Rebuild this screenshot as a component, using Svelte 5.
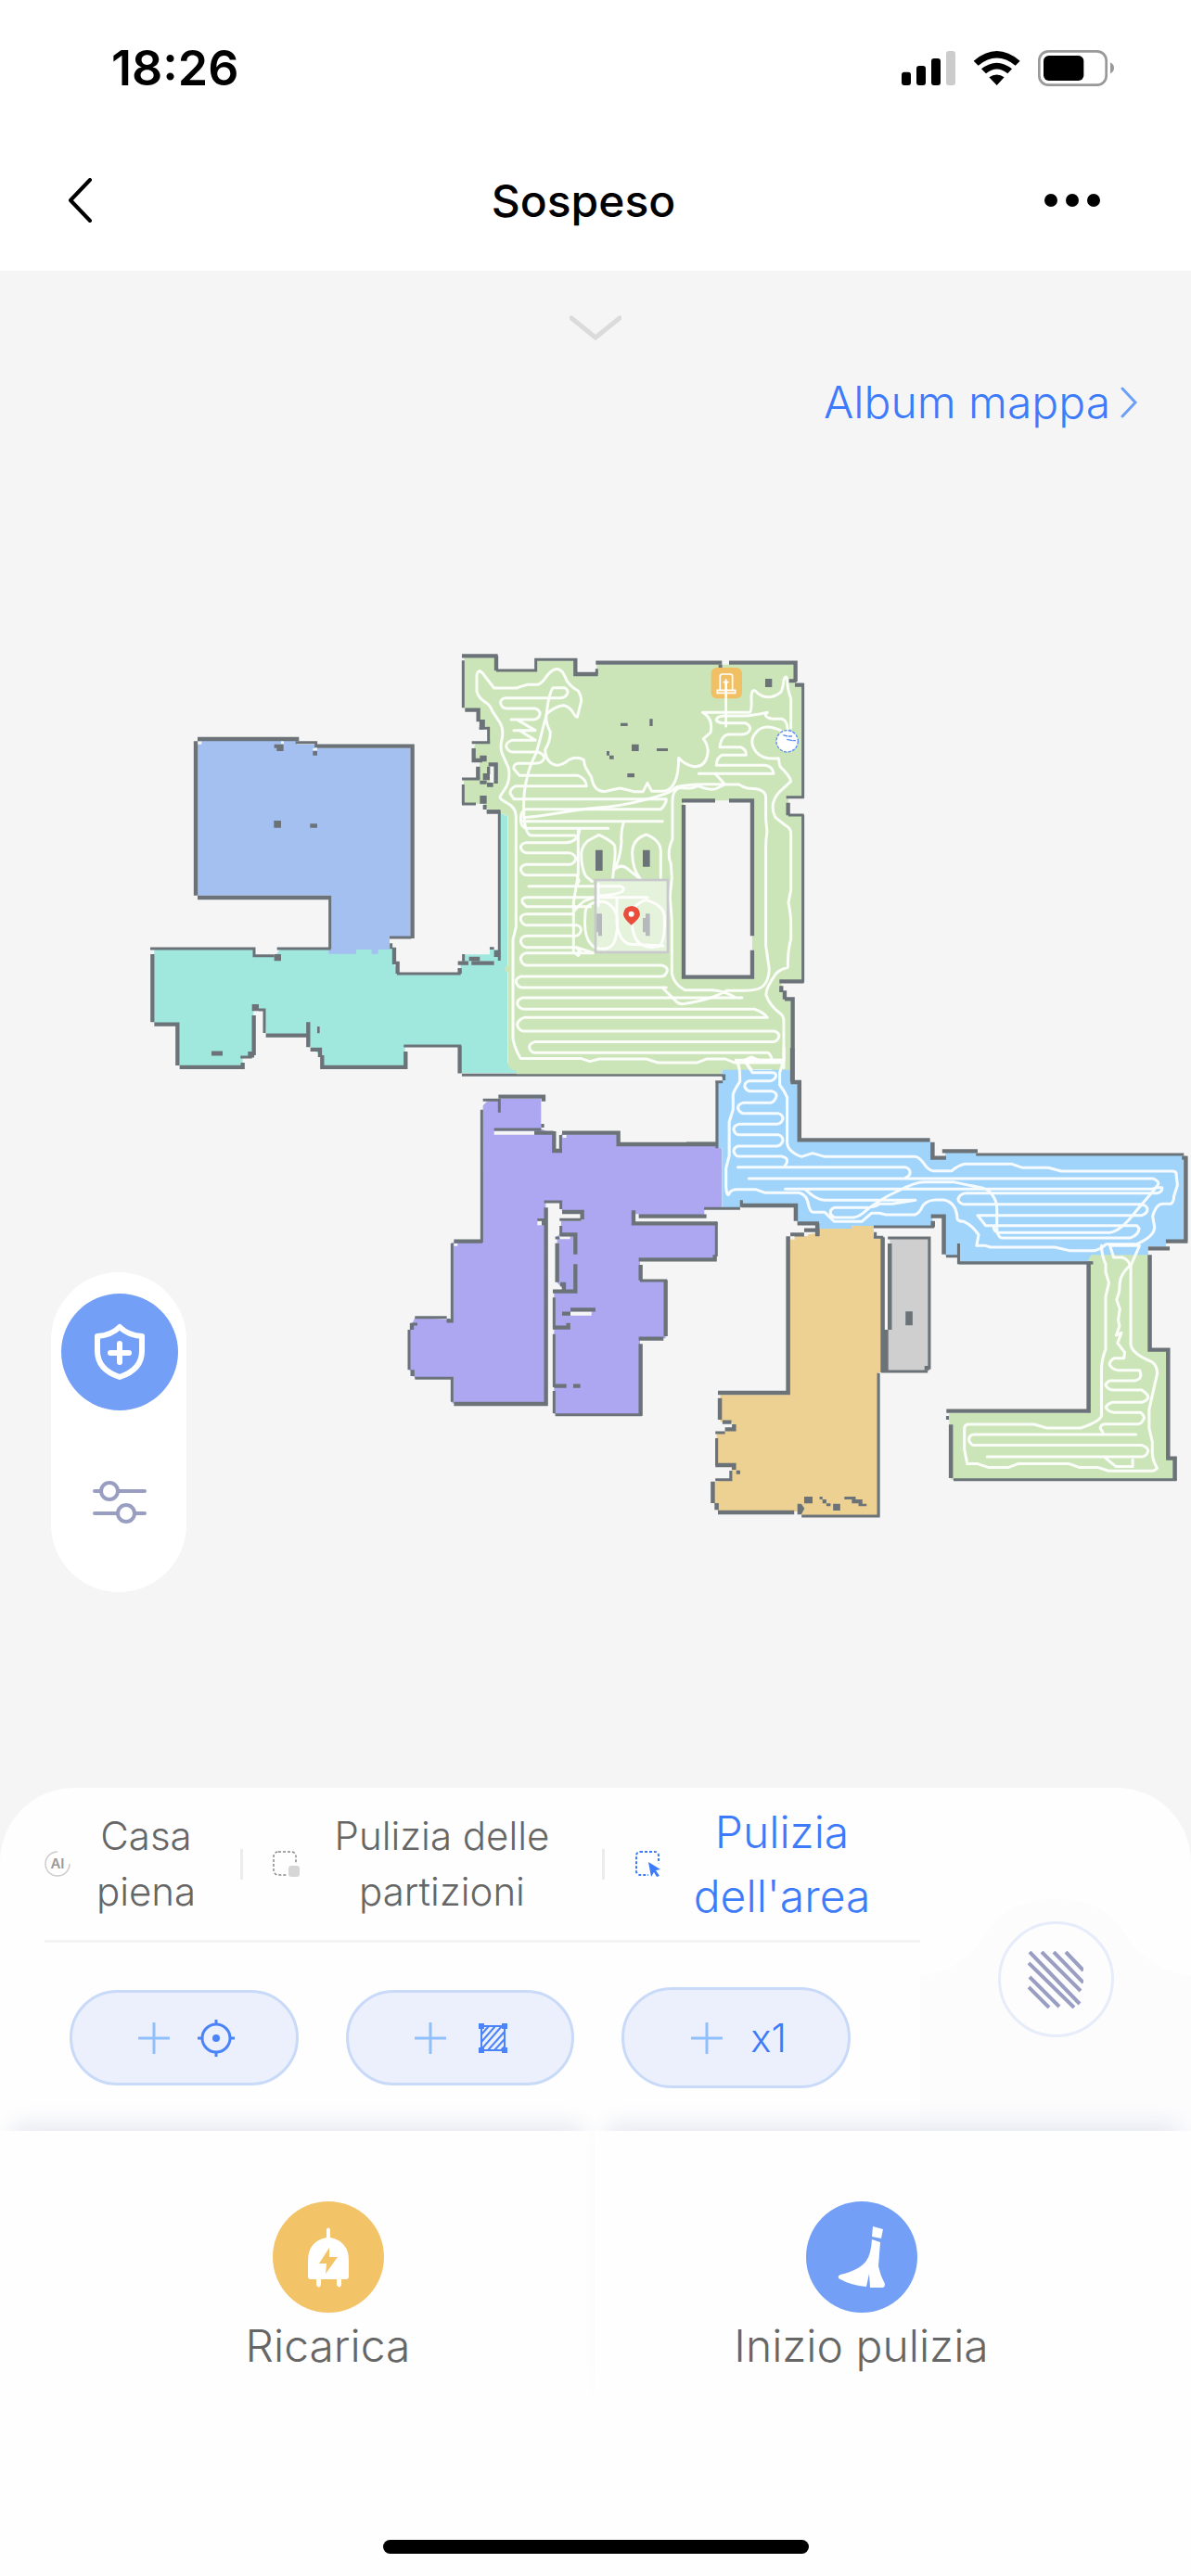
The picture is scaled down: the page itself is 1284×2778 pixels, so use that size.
<script lang="ts">
  type Mode = { id: string; label: string };

  const modes: Mode[] = [
    { id: 'all', label: 'Casa piena' },
    { id: 'rooms', label: 'Pulizia delle partizioni' },
    { id: 'area', label: "Pulizia dell'area" }
  ];

  let active = $state('area');
</script>

<div class="screen">
  <header>
    <div class="status">
      <span class="time">18:26</span>
      <svg class="status-icons" viewBox="39 39 690 117" aria-hidden="true">
        <rect x="39" y="110" width="30" height="43" rx="9" />
        <rect x="87" y="90" width="30" height="63" rx="9" />
        <rect x="135" y="66" width="30" height="87" rx="9" />
        <rect x="183" y="42" width="30" height="111" rx="9" fill="#ccc" />
        <path d="M272 74Q347 10 422 74L407 89Q347 40 287 89ZM297 100Q347 60 396 100L382 115Q347 86 312 115ZM322 127Q347 110 371 127L347 153Z" />
        <rect x="484" y="43" width="217" height="109" rx="30" fill="none" stroke="#999" stroke-width="8" />
        <rect x="498" y="57" width="130" height="81" rx="17" />
        <path d="M714 79q12 6 12 18t-12 18Z" fill="#999" />
      </svg>
    </div>
    <nav>
      <button class="icon-btn" aria-label="Indietro">
        <svg width="28" height="48" viewBox="0 0 28 48"><path d="M25 2 4 24l21 22" fill="none" stroke="#000" stroke-width="4" stroke-linecap="round" stroke-linejoin="round" /></svg>
      </button>
      <h1>Sospeso</h1>
      <button class="icon-btn end" aria-label="Altro">
        <svg width="60" height="16" viewBox="0 0 60 16"><circle cx="7" cy="8" r="7" /><circle cx="30" cy="8" r="7" /><circle cx="53" cy="8" r="7" /></svg>
      </button>
    </nav>
  </header>

  <main>
    <div class="map-head">
      <button class="icon-btn" aria-label="Espandi">
        <svg width="56" height="28" viewBox="0 0 56 28"><path d="M2 3 28 24 54 3" fill="none" stroke="#dbdbdb" stroke-width="5" stroke-linecap="round" /></svg>
      </button>
      <a href="#album">
        Album mappa
        <svg width="20" height="34" viewBox="0 0 20 34"><path d="M3 2l14 15L3 32" fill="none" stroke="#6c9ffa" stroke-width="3" stroke-linecap="round" /></svg>
      </a>
    </div>

    <svg class="map" viewBox="0 480 1284 1446" role="img" aria-label="Mappa">
      <!-- blue bedroom and teal hall -->
      <g transform="translate(140 680) scale(.3333)">
        <path fill="#a0e7de" d="M79 1032H400V1050H470L486 1032H650V1025H850L855 1080 868 1108H1070V1080H1083V1048H1164V1032H1198V590L1222 600V1400L1240 1408 1260 1432H1074V1345H890V1410H625V1380L585 1350 577 1305H440L435 1225H400V1372L365 1385V1408H160L155 1270H79Z" />
        <path fill="#a3c0f0" d="M219 357H540V368H600V380H908V990H840V1032H803V1046H782V1032H732V1046H643V1032H650V857H219Z" />
        <path class="gap" d="M219 358h13v10h-13zM489 357h9v10h-9zM592 381h14v7h-14z" />
        <path class="wall" d="M219 351H547M213 358V857M219 864H650M605 374H914V996M73 1047V1267M79 1274H154V1407M161 1413H365V1398M401 1245V1374M440 1310H576M577 1267V1348M584 1356H615V1380M622 1374V1413H892V1362M1067 1345V1433M1067 1092V1110M855 1025V1080M866 1070V1110M1061 1076H1095M1105 1076H1178M1097 1062H1132M1155 586H1198" />
        <path class="wall thin" d="M536 362H602V378M647 858V1030M840 993H910M66 1029H402V1052H467M476 1029H650M358 1380H395M417 1227H435V1302M886 1344H1072M845 1012V1030M864 1110H1070M1079 1047V1070M1195 580V1068M1074 1438H1922" />
        <path class="block" d="M467 368h30v22h-22v-10h-8zM592 390h14v14h-14zM466 615h23v23h-23zM583 625h23v13h-23zM467 1047h22v22h-22zM382 1362h20v20h-20zM395 1209h22v22h-22zM606 1281h8v22h-8zM264 1361h36v15h-36zM1178 1034h20v22h-20zM1164 1024h14v8h-14z" />
      </g>

      <!-- living room -->
      <g transform="translate(480 690) scale(.3333)">
        <path fill="#cbe5b8" d="M62 58H160V100H295V68H420V112H490V80H1130V145H1155V508H1110V568H1155V1105H1085L1100 1160H1120V1392H895V1405H230V1392H216L204 1378V1075H194V1055H204V570L180 560 178 550H140L122 530H60V450H105L112 395H92V350L100 333H140V285L115 270 105 225H62Z" />
        <path class="gap" d="M771 520H993V1091H771ZM143 409h15v40h-15zM145 448h12v14h-12z" />
        <path class="wall" d="M54 52H170M165 52V100M421 60V111H494M487 74H895M918 74H1133V135M1131 146H1160M1109 527V568M1081 1105H1160M1087 1120V1140M1098 1135V1163M1098 1162H1124V1430M64 227H107V265M117 258V290M92 351V390H120M106 410V450M134 556H178M140 403H164V465M765 520H873M918 520H993V958M993 1004V1091H771V534" />
        <path class="wall thin" d="M165 99H293V64H426M490 94V110M1157 141V512M1103 509H1160M1110 567H1160M1157 567V1108M58 67V220M110 286H140V333M86 332H145M54 450H112M58 468V532M54 531H99M124 258V290" />
        <path class="block" d="M884 80h12v12h-12zM1111 127h25v12h-25zM112 374h22v20h-22zM112 504h22v26h-22zM122 534h12v15h-12zM122 432h22v22h-22zM112 455h22v12h-22zM135 462h20v14h-20zM135 410h10v25h-10zM567 269h23v10h-23zM661 256h10v23h-10zM603 338h23v22h-23zM684 351h36v9h-36zM522 360h9v14h-9zM531 374h14v12h-14zM589 432h23v13h-23zM1035 126h22v27h-22zM486 680h23v67h-23zM639 680h23v54h-23zM486 886h21v72h-12v-12h-9zM648 886h14v72h-14v-12h-9v-46h9z" />
        <g class="trail">
          <path d="M112 101q-10 0-10 20V165q3 20 25 35q18 10 25 30l25 38q12 20 7 50q-8 30 0 50l20 45q8 30-5 60l-22 35q0 8 20 18q32 15 32 45V930l-10 40V1290q5 30 25 65H440l28 9 30-8H650l38 12H815l32-12H905l30 12H1085" />
          <path d="M112 101Q122 106 130 120L158 156H230L265 145H300Q315 138 330 115Q358 80 380 105Q388 120 395 135Q410 155 430 165Q445 190 437 210L427 250Q418 245 415 238Q400 212 380 212Q355 215 328 240Q322 262 340 298Q340 330 323 355Q325 400 362 406Q380 405 400 388Q425 375 448 388Q450 405 455 415L473 445Q480 490 515 491Q540 485 565 480Q590 485 610 491H640L654 463 668 490H705Q755 485 755 382Q775 405 805 410Q845 412 850 360Q848 335 835 320Q845 312 858 300Q868 255 833 235H985Q992 230 990 185Q992 150 1010 172Q1045 200 1085 170Q1093 155 1095 130Q1102 110 1107 130Q1105 155 1118 190V285" />
          <path d="M328 240Q333 180 348 155H385Q398 160 396 172Q390 187 372 188H195Q177 192 179 206Q184 222 199 222H290Q308 227 306 242Q301 257 286 258H213M235 260L291 293H222M240 293L292 325H215Q197 331 197 345Q202 361 217 363H300Q320 369 320 383Q315 400 290 400H235Q219 403 222 418L240 439H430Q455 449 457 473H228Q210 481 210 497L222 515H715Q715 530 698 548H262Q244 553 244 578Q244 608 264 610H527M245 587H703M328 240Q310 310 295 365Q270 415 265 445Q250 500 255 575Q260 633 280 633H420" />
          <path d="M255 575Q300 572 400 555Q460 545 530 540Q610 530 690 505Q730 495 745 478Q780 465 905 468L875 435M745 478Q800 485 815 472Q860 490 880 480L905 468H950Q965 478 980 481Q1037 480 1037 510V580L1041 620Q1036 650 1037 680V990L1048 1065Q1045 1120 1010 1130Q990 1135 970 1135H910Q860 1165 770 1178Q755 1180 745 1168L705 1128M755 480Q735 490 735 520V645Q715 690 730 725L733 770 727 830 733 910V1080Q740 1115 775 1133H865Q900 1135 935 1155" />
          <path d="M1042 235Q980 248 967 246H900Q877 248 877 260Q882 268 895 269H970Q990 278 985 292Q980 305 960 306H915Q892 310 888 347H955Q975 355 973 373H895Q877 382 877 406H1035Q1060 410 1062 433H820M1042 235Q1025 250 1060 256H1090Q1107 262 1107 290M1085 293Q1030 268 1005 300Q980 328 1005 362Q1030 390 1078 383L1083 410Q1115 440 1118 458L1083 490Q1045 530 1068 575L1100 600Q1118 610 1118 625V810L1110 850Q1118 890 1118 915V970Q1108 1000 1108 1060Q1080 1068 1070 1080Q1035 1130 1038 1150Q1050 1185 1085 1210Q1095 1218 1095 1235V1385" />
          <path d="M435 612Q430 655 390 656H262Q244 659 244 673Q249 688 262 689H400Q422 694 422 709Q417 726 400 727H262Q244 730 244 744Q249 760 262 761H425L433 779 425 797H270M430 615V760L415 850V1010L430 1022 437 1010 425 997M425 797H565Q580 800 575 812Q565 824 495 828L450 845Q430 860 410 887H262Q242 890 244 905Q249 922 262 923H425Q440 927 439 941Q434 957 421 958H262Q244 961 244 976Q249 993 262 995H425Q440 1000 480 1013H262Q244 1018 244 1033Q249 1051 262 1053H700Q720 1058 718 1071Q713 1088 700 1089H245Q229 1095 229 1107Q234 1124 249 1125H715" />
          <path d="M655 833H262Q244 835 250 851L262 863H470" />
          <path d="M960 1158H250Q230 1166 234 1180Q239 1194 256 1195H1000Q1030 1205 1042 1222H255Q233 1230 233 1247Q238 1264 253 1266H1065Q1080 1271 1080 1282Q1075 1300 1060 1301H290Q272 1305 272 1319Q277 1335 290 1336H1045Q1057 1346 1057 1366" />
          <path d="M440 690Q445 660 465 648L497 631Q535 648 548 665Q552 690 546 730L542 770M440 690Q440 740 455 765L475 782M605 690Q605 645 650 630Q700 650 697 690V770M605 690Q605 740 630 772M577 590Q567 620 570 655Q565 715 545 745Q570 720 595 745L632 775M505 847Q450 850 453 890Q445 970 483 995Q545 1015 553 955Q565 900 545 870Q525 845 505 847M650 842Q712 860 709 902Q712 980 690 992Q640 1002 618 970Q600 940 605 890Q605 855 650 842M555 840V920Q565 980 600 985L705 990M495 790V860M940 1360H1085M965 1362L990 1350 1015 1360M968 1362L993 1394H1053" />
        </g>
        <rect x="486" y="777" width="234" height="234" fill="#fff" fill-opacity=".5" stroke="#c8c9cc" stroke-width="8" />
        <path fill="#ea4d3c" d="M602 923q-26-22-26-35a27 27 0 0 1 54 0q0 13-28 35Z" />
        <circle cx="602" cy="887" r="9" fill="#fff" />
        <rect x="860" y="90" width="100" height="100" rx="18" fill="#f1c064" />
        <path fill="none" stroke="#fff" stroke-width="5" d="M889 162V118q0-7 7-7h26q7 0 7 7v44M880 163h58v9h-58zM899 137h18M908 127v20" />
        <path fill="none" stroke="#fff" stroke-width="8" stroke-linecap="round" d="M908 137V280" />
        <circle cx="1106" cy="328" r="35" fill="#fff" stroke="#5b8ef5" stroke-width="4" stroke-dasharray="10 4" />
        <path fill="none" stroke="#5b8ef5" stroke-width="4" d="M1093 308l14 4M1110 312h12M1105 322l18 4M1124 326h10" />
      </g>

      <!-- purple rooms -->
      <g transform="translate(480 1160) scale(.3333)">
        <path fill="#aca7f0" d="M122 97L135 84 178 75H310V172L350 190V245H375V190H560V225H878L895 237V425L838 432V450H608V478H876V590H630V665H713V850H630V1095H352V700L380 690 362 670V520L375 510V470H440V445L378 440 375 408H325V1060H22V979H-98L-115 952V822L-98 782 22 790V540H118Z" />
        <path class="gap" d="M158 179h130v12h-130zM405 763h68v13h-68zM612 448h14v22h-14zM380 192h12v9h-12zM28 543h12v8h-12zM298 470h14v14h-14zM368 520h36v9h-36z" />
        <path class="wall" d="M172 68H318V83M288 185H350M378 185H560V222H880M352 180V243H378M28 536H120M326 427V1068M28 1062H332M378 441H443V465M626 455H845M609 436V478H880M626 595H872V580M632 612V662M713 662V843M626 851H706M632 868V1100M372 514H421V578M362 542V668M421 610V698H348M372 675H384V692M405 757H486M378 770H405M348 815H398V800M352 1004H392M414 1004H437M-108 800V822M-106 952V972" />
        <path class="wall thin" d="M122 79H175V119M118 110V540M158 174H310M22 542V795H5M320 408H374V432M370 466H440M374 486V518M877 473V585M630 663H718M352 718V820M352 836V1008M352 1020V1092M356 1097H636M-98 782H5M-117 822V952M-98 979H22V1055M-108 804H-90M373 192V240M356 525H370" />
        <path class="block" d="M310 156h10v12h-10zM298 462h24v8h-24zM312 470h12v14h-12zM5 786h12v12h-12z" />
      </g>

      <!-- storage, orange room and small green room -->
      <g transform="translate(740 1300) scale(.3469 .3333)">
        <path fill="#edd193" d="M323 100L405 90 414 72H514V65H582V100L610 107V540H597V1002H360L345 990H98L85 960V895L140 885V840H94V740L150 720 140 700H105V613H316Z" />
        <path fill="#cfcfcf" d="M632 107H755V535H620V402H632Z" />
        <path fill="#cbe5b8" d="M1245 170L1258 155H1435V467H1497V818H1518V887H822L816 672H1250V190Z" />
        <path class="wall" d="M316 100V606H98M104 623V693M112 701H140M120 724H148V708M90 840H148V855M82 893V963M94 963V985M98 993H335M610 103V540M621 402V540M632 123V402M1250 185V665H808M1440 160V467H1497V818H1518V890M822 709V882M323 94H366M366 80H402M407 58V100" />
        <path class="wall thin" d="M582 103H612M587 86V100M626 105H755V530M605 537H750M597 542V1005H358M94 753V840M90 735H120M90 887H138V858M830 887H1523M846 186H1264" />
        <path class="block" d="M740 519h14v14h-14zM681 343h22v45h-22zM155 857h12v12h-12zM345 965h12l10 15-10 20h-12zM366 942h26v22h-26zM456 965h22v22h-22zM414 942h9v9h12v13h13v9h-13v-9h-12v-13h-9zM491 942h35v9h21v14h13v8h-25v-9h-21v-13h-23zM807 681h9v12h-9z" />
      </g>

      <!-- corridor -->
      <g transform="translate(740 1130) scale(.3469 .3333)">
        <path fill="#a1d4fa" d="M111 71H323L329 110H350V300H757L765 355H805V335H900V345H1545V625H1490V642H1435V670H1258L1245 695H846V672H804V545H765V577H582L514 575V585H414L405 570H345L340 510H172L165 520H111V325H97V110H111Z" />
        <path class="wall" d="M0 311H93M329 0V110M324 111H351V298H757M765 305V356H807M795 334H905M1552 350V625M1490 626H1558M1435 649H1502M800 668V545H760M766 560V580M171 510H340V560M345 568H412M407 568V608" />
        <path class="wall thin" d="M110 90H117V105M90 110H113M95 108V325M900 345H1546M807 674H846M846 633V695H1262M582 579H770M55 520H167M171 493V515" />
        <path class="block" d="M1540 350h15v12h-15z" />
        <g class="trail">
          <path d="M155 40Q168 60 166 110Q150 135 145 150V200L133 240V350L123 390V450Q127 490 135 467Q143 458 155 458H215L245 469H350Q375 475 380 510Q385 532 395 532H430L460 562H545L575 535H600L620 540H710Q725 535 735 510Q750 492 775 492H800Q840 500 842 555Q848 562 862 562Q890 575 908 605L902 640H930L945 645H1145L1190 656H1270Q1290 650 1305 635H1400Q1455 610 1455 580L1449 545Q1460 505 1480 505H1505Q1515 500 1515 480L1526 445 1522 405Q1520 399 1510 399H1165L1125 388H1045L1012 376H865Q845 380 825 398H765Q750 395 735 370Q720 352 710 352H430L392 341 358 352Q313 335 313 305V160Q305 140 290 120V80L303 40V0" />
          <path d="M180 40L205 80H265Q280 80 278 92Q273 106 258 107H195Q181 112 181 125Q186 138 196 140H265Q280 145 280 155Q275 175 262 178H175Q160 183 160 195Q165 211 178 212H285Q300 217 300 230Q295 246 280 247H162Q147 252 147 265Q152 281 162 281H285Q300 286 300 300Q295 317 280 318H160Q147 323 147 335Q152 351 162 351H295Q325 356 305 384M160 386H680Q695 391 695 403Q695 415 682 420" />
          <path d="M194 423H1450Q1467 430 1467 440Q1460 457 1445 457H307M370 458Q400 490 430 493H712L640 505H600Q585 517 550 517H460Q445 522 448 537Q455 549 465 549H520Q540 545 560 525Q600 490 660 462Q710 434 740 434H830Q880 445 905 450Q940 456 950 475Q965 495 965 520V595Q972 615 980 615H1380Q1405 605 1407 585L1400 575H930L905 542H1415Q1435 535 1432 518Q1425 506 1412 506H860Q843 500 845 487Q852 470 870 470H1465Q1480 465 1478 452H1460L1400 525Q1350 595 1315 598H970Q955 595 955 580" />
          <path d="M180 40H300M195 46L205 34 225 42" />
          <path d="M1290 640Q1290 670 1303 700V725L1313 760 1303 805V975Q1290 1010 1290 1040V1190Q1285 1210 1225 1230H1120L1080 1218H875Q864 1220 864 1232V1300L873 1346H905L940 1358H1000L1030 1346H1190L1222 1358H1280L1312 1369H1450Q1460 1366 1463 1360Q1448 1335 1448 1310V1275L1438 1230V1170L1463 1055Q1465 1030 1445 1015Q1385 990 1381 960V705L1408 640H1316L1328 678H1355Q1380 690 1377 705Q1348 735 1347 760L1345 790 1337 815 1347 845 1342 880 1346 900 1336 930 1352 922 1340 955 1362 985 1360 1004H1330Q1315 1012 1315 1025Q1322 1040 1340 1043H1408Q1416 1060 1408 1070Q1400 1077 1390 1077H1315Q1303 1084 1303 1092Q1310 1105 1325 1107H1415Q1435 1120 1435 1132Q1425 1147 1412 1147H1322Q1304 1155 1304 1165Q1312 1178 1330 1180H1412Q1424 1190 1422 1200Q1415 1216 1405 1217H1300Q1287 1220 1286 1230L1297 1250M1397 1251H895Q878 1251 878 1269Q883 1284 893 1286H1415Q1433 1291 1435 1304Q1430 1322 1417 1323H935M1300 1325L1335 1355H1387V1333" />
        </g>
        <path class="gap" d="M323 610h13v10h-13zM366 600h12v9h-12z" />
      </g>
    </svg>

    <div class="tools">
      <button class="tool on" aria-label="Zone vietate">
        <svg width="60" height="62" viewBox="0 0 60 62" fill="none" stroke="#fff" stroke-width="6" stroke-linecap="round" stroke-linejoin="round"><path d="M30 4Q21 13 6 14V30Q6 50 30 58 54 50 54 30V14Q39 13 30 4Z" /><path d="M30 22V42M20 32H40" /></svg>
      </button>
      <button class="tool" aria-label="Impostazioni">
        <svg width="60" height="48" viewBox="0 0 60 48" fill="none" stroke="#999ec0" stroke-width="4" stroke-linecap="round"><path d="M3 12H9M29 12H57M3 36H27M47 36H57" /><circle cx="19" cy="12" r="9" /><circle cx="37" cy="36" r="9" /></svg>
      </button>
    </div>
  </main>

  <section class="panel">
    <div class="left">
      <div class="modes">
        {#each modes as mode, i}
          {#if i > 0}<span class="sep"></span>{/if}
          <button class="mode" class:active={active === mode.id} onclick={() => (active = mode.id)}>
            {#if mode.id === 'all'}
              <svg width="28" height="28" viewBox="0 0 28 28"><path d="M14 1A13 13 0 1 0 27 14" fill="none" stroke="#ccc" stroke-width="1.5" /><text x="14" y="19" text-anchor="middle" font-size="15" font-weight="600" fill="#999">AI</text></svg>
            {:else if mode.id === 'rooms'}
              <svg width="30" height="28" viewBox="0 0 30 28"><rect x="1" y="1" width="24" height="25" rx="5" fill="none" stroke="#888" stroke-width="1.5" stroke-dasharray="3 2" /><rect x="15" y="14" width="15" height="14" fill="#fff" /><rect x="17" y="16" width="12" height="12" rx="3" fill="#d6d6d6" /></svg>
            {:else}
              <svg width="30" height="28" viewBox="0 0 30 28"><rect x="2" y="1" width="24" height="25" rx="4" fill="none" stroke="currentColor" stroke-width="2" stroke-dasharray="3 2" /><path d="M15 11V28H30V14Z" fill="#fff" /><path d="M15 12 28 20 23 21 27 27 24 28 21 23 18 28Z" fill="currentColor" /></svg>
            {/if}
            <span class="label">{mode.label}</span>
          </button>
        {/each}
      </div>
      <div class="pills">
        <button class="pill" aria-label="Aggiungi punto">
          <svg class="plus" width="34" height="34" viewBox="0 0 34 34"><path d="M17 1V33M1 17H33" /></svg>
          <svg width="40" height="40" viewBox="0 0 40 40" fill="none" stroke="#4a84f8" stroke-width="3"><circle cx="20" cy="20" r="15" /><path d="M20 0V6M20 34V40M0 20H6M34 20H40" /><circle cx="20" cy="20" r="4" fill="#4a84f8" stroke="none" /></svg>
        </button>
        <button class="pill" aria-label="Aggiungi area">
          <svg class="plus" width="34" height="34" viewBox="0 0 34 34"><path d="M17 1V33M1 17H33" /></svg>
          <svg width="40" height="40" viewBox="0 0 40 40" fill="none" stroke="#4a84f8" stroke-width="2"><rect x="8" y="7" width="25" height="26" /><path d="M8 16 16 7M8 24 23 7M8 32 30 7M15 33 33 13M22 33 33 21M29 33 33 29" /><path d="M5 4h6v6H5zM30 4h6v6h-6zM5 30h6v6H5zM30 30h6v6h-6z" fill="#4a84f8" stroke="none" /></svg>
        </button>
        <button class="pill tall">
          <svg class="plus" width="34" height="34" viewBox="0 0 34 34"><path d="M17 1V33M1 17H33" /></svg>
          x1
        </button>
      </div>
    </div>
    <div class="right">
      <svg class="bump" viewBox="0 0 292 250" preserveAspectRatio="none" aria-hidden="true"><path fill="#fcfcfd" d="M0 83Q50 76 72 35 95 0 146 0T220 35Q242 76 292 83V250H0Z" /></svg>
      <button class="round" aria-label="Modalità di pulizia">
        <svg width="60" height="62" viewBox="0 0 60 62" fill="none" stroke="#999ec2" stroke-width="4"><path d="M2 1 56 57M15 1 57 43M28 1 60 34M41 1 60 21M1 13 50 61M2 28 34 60M1 39 23 61" /></svg>
      </button>
    </div>
  </section>

  <footer>
    <div class="actions">
      <button class="action">
        <span class="disc gold">
          <svg width="48" height="68" viewBox="0 0 48 68"><path fill="#fff" d="M22 4q2-3 4 0V13Q46 17 46 38V55q0 3-3 3H38v6q-2 5-5 0V58H16v6q-2 5-5 0V58H5q-3 0-3-3V38Q2 17 22 13Z" /><path fill="#f3c467" d="M25 24 14 41h8l-1 11 13-18h-9Z" /></svg>
        </span>
        Ricarica
      </button>
      <button class="action">
        <span class="disc blue">
          <svg width="54" height="68" viewBox="0 0 54 68" fill="#fff"><path d="M39 1 50 4 48 14 38 12ZM38 15 47 18 45 44Q47 54 52 63 52 67 49 67H36L35 52 32 66Q16 65 2 57 1 54 4 53 25 48 32 38 37 31 38 15Z" /></svg>
        </span>
        Inizio pulizia
      </button>
    </div>
    <div class="home"></div>
  </footer>
</div>

<style>
  :global(body) {
    background: #fff;
  }

  .screen {
    display: flex;
    flex-direction: column;
    min-height: 100vh;
    font-family: Inter, 'Liberation Sans', sans-serif;
    font-size: 48px;
    color: #666;
    background: #f5f5f5;
  }

  button {
    padding: 0;
    border: 0;
    background: none;
    font: inherit;
    color: inherit;
    cursor: pointer;
  }

  svg {
    display: block;
    flex-shrink: 0;
  }

  header {
    background: #fff;
    color: #000;
  }

  .status {
    display: flex;
    align-items: center;
    justify-content: space-between;
    height: 146px;
    padding: 0 82px 0 120px;
  }

  .time {
    font-size: 52px;
    font-weight: 600;
  }

  .status-icons {
    width: 230px;
    height: 39px;
  }

  nav {
    display: grid;
    grid-template-columns: 1fr auto 1fr;
    align-items: center;
    height: 146px;
    padding: 0 98px 6px 72px;
    box-sizing: border-box;
  }

  h1 {
    margin: 0;
    font-size: 48px;
    font-weight: 500;
  }

  .icon-btn {
    justify-self: start;
  }

  .icon-btn.end {
    justify-self: end;
  }

  main {
    position: relative;
  }

  .map-head {
    display: flex;
    flex-direction: column;
    align-items: center;
    gap: 36px;
    padding: 48px 57px 16px;
  }

  .map-head a {
    display: flex;
    align-items: center;
    align-self: flex-end;
    gap: 10px;
    line-height: 60px;
    font-weight: 350;
    color: #3d7bfb;
    text-decoration: none;
  }

  .map {
    width: 100%;
  }

  .wall {
    fill: none;
    stroke: #6b7378;
    stroke-width: 13;
  }

  .wall.thin {
    stroke-width: 9;
  }

  .block {
    fill: #6b7378;
  }

  .gap {
    fill: #f5f5f5;
  }

  .trail {
    fill: none;
    stroke: #fff;
    stroke-opacity: 0.9;
    stroke-width: 9;
    stroke-linecap: round;
    stroke-linejoin: round;
  }

  .tools {
    position: absolute;
    left: 55px;
    bottom: 209px;
    display: flex;
    flex-direction: column;
    gap: 36px;
    padding: 23px 9px 34px 11px;
    border-radius: 73px;
    background: #fff;
  }

  .tool {
    display: grid;
    place-items: center;
    width: 126px;
    height: 126px;
    border-radius: 50%;
  }

  .tool.on {
    background: #739ff7;
  }

  .panel {
    display: grid;
    grid-template-columns: 992fr 292fr;
    height: 370px;
    margin-top: 2px;
    border-radius: 80px 80px 0 0;
    background: #fefefe;
    overflow: hidden;
  }

  .left {
    padding-left: 48px;
  }

  .modes {
    display: grid;
    grid-template-columns: 211fr 3px 387fr 3px 340fr;
    align-items: center;
    height: 164px;
    border-bottom: 3px solid #f3f3f4;
  }

  .sep {
    height: 33px;
    background: #ececec;
  }

  .mode {
    display: flex;
    align-items: center;
    padding: 0 20px 0 32px;
    font-size: 42px;
    font-weight: 350;
    line-height: 60px;
  }

  .mode:first-child {
    padding-left: 0;
  }

  .mode.active {
    font-size: 48px;
    line-height: 69px;
    color: #3d7bfb;
  }

  .label {
    flex: 1;
    padding: 0 24px;
  }

  .pills {
    display: flex;
    align-items: center;
    gap: 51px;
    padding: 48px 75px 0 27px;
  }

  .pill {
    display: flex;
    flex: 1;
    align-items: center;
    justify-content: center;
    gap: 30px;
    height: 103px;
    padding-left: 6px;
    box-sizing: border-box;
    border: 3px solid #c9daf8;
    border-radius: 56px;
    background: #ebf0fc;
    font-size: 42px;
    font-weight: 350;
    color: #3d7bfb;
  }

  .pill.tall {
    height: 109px;
  }

  .plus {
    fill: none;
    stroke: #91bffb;
    stroke-width: 3;
    stroke-linecap: round;
  }

  .right {
    position: relative;
    display: flex;
    justify-content: center;
    align-items: flex-start;
    padding-top: 144px;
  }

  .bump {
    position: absolute;
    left: 0;
    bottom: 0;
    width: 100%;
    height: 250px;
  }

  .round {
    position: relative;
    display: grid;
    place-items: center;
    width: 125px;
    height: 125px;
    box-sizing: border-box;
    border: 3px solid #e6ecf9;
    border-radius: 50%;
    background: #fdfdfe;
  }

  footer {
    position: relative;
    display: flex;
    flex: 1;
    flex-direction: column;
    justify-content: space-between;
    background: #fefefe;
  }

  .actions {
    display: flex;
  }

  .action {
    display: flex;
    flex: 1;
    flex-direction: column;
    align-items: center;
    gap: 6px;
    padding: 76px 0 52px 66px;
    font-weight: 350;
    line-height: 60px;
    background: #fefefe;
    box-shadow: 0 -20px 24px -14px #e4e7f0;
  }

  .action:last-child {
    padding-right: 68px;
    padding-left: 0;
  }

  .disc {
    display: grid;
    place-items: center;
    width: 120px;
    height: 120px;
    border-radius: 50%;
  }

  .gold {
    background: #f3c467;
  }

  .blue {
    background: #739ff7;
  }

  .home {
    align-self: center;
    width: 459px;
    height: 15px;
    margin-bottom: 24px;
    border-radius: 8px;
    background: #000;
  }
</style>
